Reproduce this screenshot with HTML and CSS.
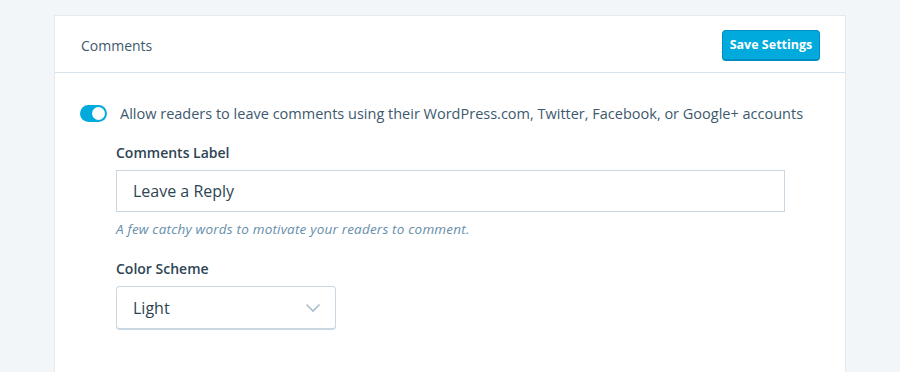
FILE: index.html
```html
<!DOCTYPE html>
<html>
<head>
<meta charset="utf-8">
<link rel="stylesheet" href="styles.css">
</head>
<body>
<div class="card">
  <div class="card-header">
    <span class="card-title">Comments</span>
    <button class="btn-primary">Save Settings</button>
  </div>
  <div class="card-body">
    <label class="toggle-row">
      <span class="toggle"><span class="knob"></span></span>
      <span class="toggle-label">Allow readers to leave comments using their WordPress.com, Twitter, Facebook, or Google+ accounts</span>
    </label>
    <div class="fields">
      <div class="field">
        <div class="field-label">Comments Label</div>
        <div class="text-input">Leave a Reply</div>
        <div class="hint">A few catchy words to motivate your readers to comment.</div>
      </div>
      <div class="field">
        <div class="field-label">Color Scheme</div>
        <div class="select">
          <span>Light</span>
          <svg class="chev" width="16" height="10" viewBox="0 0 16 10"><path d="M1.5 1.5 L8 8 L14.5 1.5" fill="none" stroke="#a8bece" stroke-width="1.6"/></svg>
        </div>
      </div>
    </div>
  </div>
</div>
</body>
</html>
```
FILE: styles.css
```css
html, body {
  margin: 0;
  padding: 0;
  background: #f3f6f8;
  font-family: "Open Sans", "Noto Sans", sans-serif;
  color: #2e4453;
}
body {
  padding: 15px 54px 0 54px;
  height: 372px;
  box-sizing: border-box;
  overflow: hidden;
}
.card {
  background: #fff;
  border: 1px solid #e3ebf0;
  border-bottom: none;
  height: 357px;
  box-sizing: border-box;
}
.card-header {
  display: flex;
  align-items: center;
  justify-content: space-between;
  height: 56px;
  padding: 0 25px 0 26px;
  border-bottom: 1px solid #d7e3ea;
}
.card-title {
  font-size: 14px;
  color: #3d596d;
  position: relative;
  top: 1px;
}
.btn-primary {
  font-family: inherit;
  font-size: 12.5px;
  font-weight: 700;
  color: #fff;
  background: #00aadc;
  border: 1px solid #008ec2;
  border-bottom-width: 2px;
  border-radius: 4px;
  height: 31px;
  width: 98px;
  padding: 0;
  position: relative;
  top: 1px;
}
.card-body {
  padding: 31px 25px 0 25px;
}
.toggle-row {
  display: flex;
  align-items: center;
  gap: 13px;
}
.toggle {
  width: 27px;
  height: 17px;
  border-radius: 9px;
  background: #00aadc;
  position: relative;
  flex: none;
}
.knob {
  position: absolute;
  right: 2px;
  top: 2px;
  width: 13px;
  height: 13px;
  border-radius: 50%;
  background: #fff;
}
.toggle-label {
  font-size: 14.5px;
  color: #3d596d;
}
.fields {
  padding-left: 36px;
  padding-top: 20px;
  display: flex;
  flex-direction: column;
  gap: 21px;
}
.field-label {
  font-size: 14px;
  font-weight: 600;
  color: #2e4453;
  margin-bottom: 8px;
}
.text-input {
  width: 669px;
  height: 42px;
  box-sizing: border-box;
  border: 1px solid #c8d7e1;
  padding: 0 16px;
  display: flex;
  align-items: center;
  font-size: 16px;
  color: #2e4453;
}
.hint {
  font-size: 13.5px;
  font-style: italic;
  letter-spacing: 0.2px;
  color: #668eaa;
  margin-top: 8px;
}
.select {
  width: 220px;
  height: 44px;
  box-sizing: border-box;
  border: 1px solid #c8d7e1;
  border-bottom-width: 2px;
  border-radius: 4px;
  padding: 0 14px 0 16px;
  display: flex;
  align-items: center;
  justify-content: space-between;
  font-size: 16px;
  color: #2e4453;
}
.chev {
  display: block;
}
```
